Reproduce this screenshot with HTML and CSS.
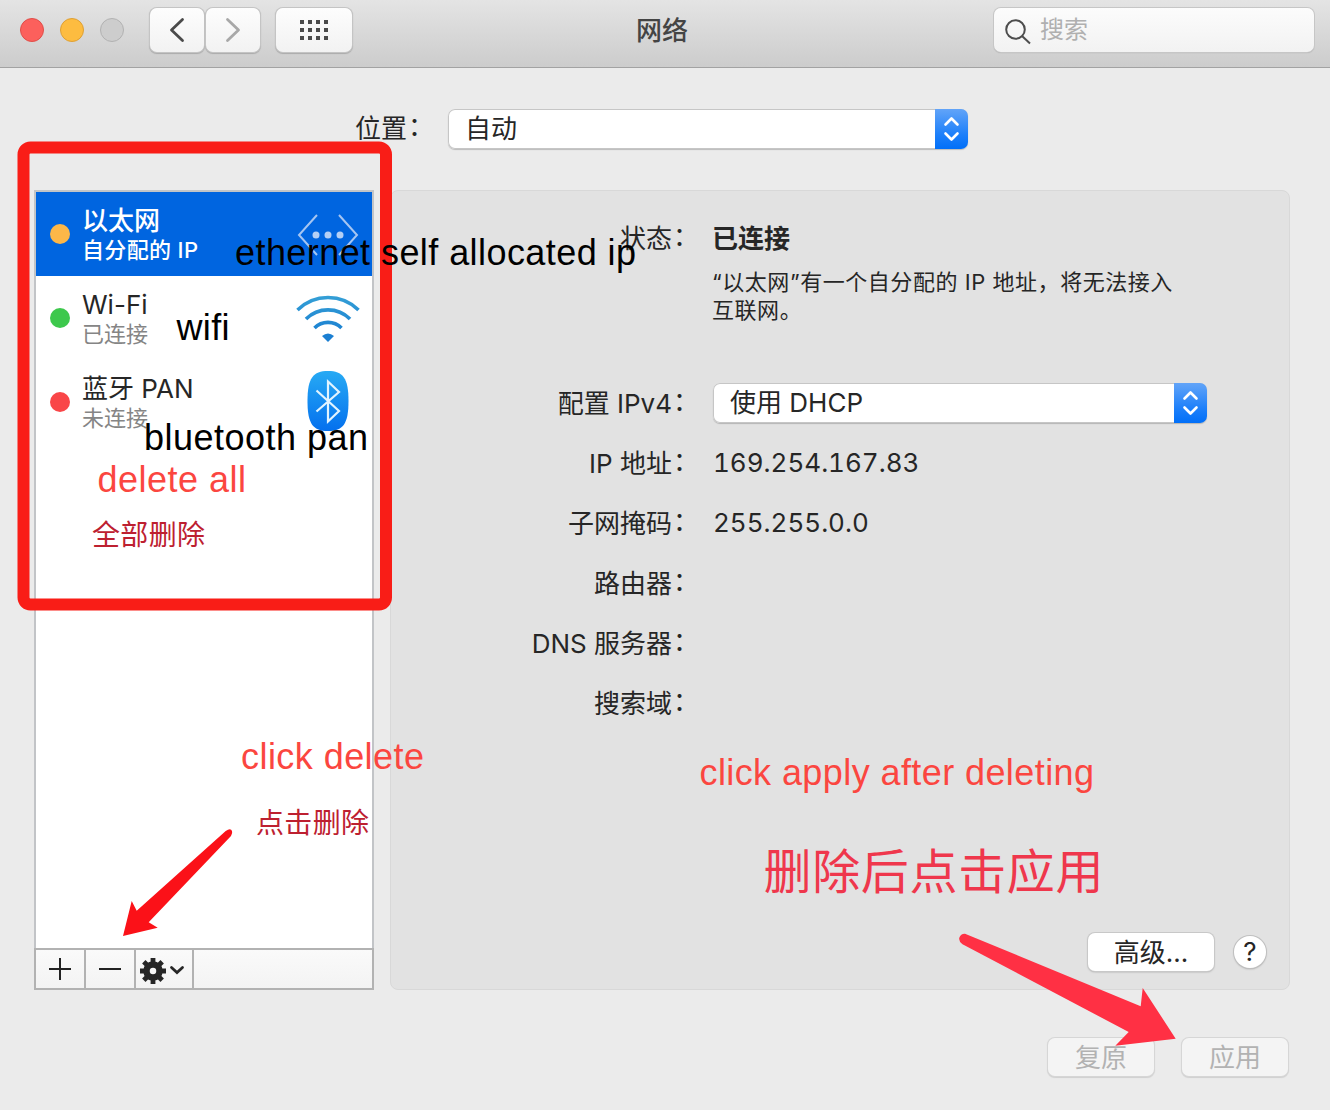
FILE: index.html
```html
<!DOCTYPE html>
<html lang="zh-CN">
<head>
<meta charset="utf-8">
<title>网络</title>
<link rel="stylesheet" href="styles.css">
</head>
<body>
<div class="window">
  <header class="titlebar">
    <div class="lights"><i class="light close"></i><i class="light minimize"></i><i class="light zoom"></i></div>
    <div class="nav">
      <button class="tool"><svg width="54" height="44" fill="none" stroke="#4a4a4a" stroke-width="2.8" stroke-linecap="round" stroke-linejoin="round"><path d="M32.500 11.500 21.500 22l11 10.500"/></svg></button>
      <button class="tool"><svg width="54" height="44" fill="none" stroke="#a8a8a8" stroke-width="2.800" stroke-linecap="round" stroke-linejoin="round"><path d="M21.500 11.500 32.500 22l-11 10.500"/></svg></button>
    </div>
    <button class="tool grid-tool"><svg width="28" height="20" fill="#4a4a4a"><path d="M0 0h4v4H0zm8 0h4v4H8zm8 0h4v4h-4zm8 0h4v4h-4zM0 8h4v4H0zm8 0h4v4H8zm8 0h4v4h-4zm8 0h4v4h-4zM0 16h4v4H0zm8 0h4v4H8zm8 0h4v4h-4zm8 0h4v4h-4z"/></svg></button>
    <h1 class="title">网络</h1>
    <div class="search"><svg width="26" height="26" fill="none" stroke="#4d4d4d" stroke-width="2"><circle cx="10.500" cy="10.500" r="9.300"/><path d="m17 17 8 7.500"/></svg><span>搜索</span></div>
  </header>

  <div class="location">
    <span class="location-label">位置<span class="colon">：</span></span>
    <div class="select"><span>自动</span><b class="stepper"><svg width="33" height="40" fill="none" stroke="#fff" stroke-width="2.600" stroke-linecap="round" stroke-linejoin="round"><path d="m10.500 15.500 6-6 6 6M10.500 24.500l6 6 6-6"/></svg></b></div>
  </div>

  <main class="content">
    <aside class="sidebar">
      <ul class="services">
        <li class="service selected">
          <i class="dot orange"></i>
          <div class="names"><div class="name">以太网</div><div class="state">自分配的 IP</div></div>
          <svg class="glyph" width="66" height="64" fill="none" stroke="#a5c5f2" stroke-width="2"><path d="M22 13 4 33l18 20M44 13l18 20-18 20"/><g fill="#b4cff5" stroke="none"><circle cx="21" cy="33" r="3.500"/><circle cx="33" cy="33" r="3.500"/><circle cx="45" cy="33" r="3.500"/></g></svg>
        </li>
        <li class="service">
          <i class="dot green"></i>
          <div class="names"><div class="name">Wi-Fi</div><div class="state">已连接</div></div>
          <svg class="glyph" width="66" height="64" fill="none" stroke="url(#wave)" stroke-width="3.600"><defs><linearGradient id="wave" gradientUnits="userSpaceOnUse" x1="0" y1="9" x2="0" y2="56"><stop offset="0" stop-color="#35a0d6"/><stop offset="1" stop-color="#1478d0"/></linearGradient></defs><path d="M2.500 24a43.500 43.500 0 0 1 61 0M11 33a31 31 0 0 1 44 0M19.500 42a19 19 0 0 1 27 0"/><path d="M27 50q6-5 12 0l-6 6z" fill="#1b7fd2" stroke="none"/></svg>
        </li>
        <li class="service">
          <i class="dot red"></i>
          <div class="names"><div class="name">蓝牙 PAN</div><div class="state">未连接</div></div>
          <svg class="glyph" width="66" height="64"><defs><linearGradient id="bt" x1="0" y1="0" x2="0" y2="1"><stop offset="0" stop-color="#27aaf4"/><stop offset="1" stop-color="#0470ee"/></linearGradient></defs><path d="M33 1c15 0 20.500 7 20.500 30S48 61 33 61 12.500 54 12.500 31 18 1 33 1z" fill="url(#bt)"/><path d="m21.500 20.500 22.500 20.500-11 10.500v-40L44 22 21.500 41.500" fill="none" stroke="#e2f4ff" stroke-width="2.200"/></svg>
        </li>
      </ul>
      <div class="actions">
        <button class="action"><svg width="24" height="24" stroke="#222" stroke-width="2"><path d="M12 1v22M1 12h22"/></svg></button>
        <button class="action"><svg width="24" height="24" stroke="#222" stroke-width="2"><path d="M1 12h22"/></svg></button>
        <button class="action gear"><svg width="46" height="28" viewBox="0 0 46 28"><g transform="translate(14 15)"><g stroke="#262626" stroke-width="4.800"><path d="M0-13V-7M0 7v6M-13 0h6M7 0h6M-9.200-9.200l4 4M5.200 5.200l4 4M-9.200 9.200l4-4M5.200-5.200l4-4"/></g><circle r="6.500" fill="none" stroke="#262626" stroke-width="6.500"/></g><path d="m32.500 11.500 5.500 5 5.500-5" fill="none" stroke="#262626" stroke-width="2.800" stroke-linecap="round"/></svg></button>
      </div>
    </aside>

    <section class="panel">
      <dl class="form">
        <dt>状态<span class="colon">：</span></dt><dd class="status">已连接</dd>
        <dt></dt><dd class="hint">“以太网”有一个自分配的 IP 地址，将无法接入<br>互联网。</dd>
        <dt>配置 IPv4<span class="colon">：</span></dt><dd><div class="select"><span>使用 DHCP</span><b class="stepper"><svg width="33" height="40" fill="none" stroke="#fff" stroke-width="2.600" stroke-linecap="round" stroke-linejoin="round"><path d="m10.500 15.500 6-6 6 6M10.500 24.500l6 6 6-6"/></svg></b></div></dd>
        <dt>IP 地址<span class="colon">：</span></dt><dd class="number">169.254.167.83</dd>
        <dt>子网掩码<span class="colon">：</span></dt><dd class="number">255.255.0.0</dd>
        <dt>路由器<span class="colon">：</span></dt><dd></dd>
        <dt>DNS 服务器<span class="colon">：</span></dt><dd></dd>
        <dt>搜索域<span class="colon">：</span></dt><dd></dd>
      </dl>
      <div class="panel-buttons"><button class="button advanced">高级...</button><button class="help">?</button></div>
    </section>
  </main>

  <footer class="footer"><button class="button disabled">复原</button><button class="button disabled">应用</button></footer>

  <svg class="notes" width="1330" height="1110">
    <rect x="23.500" y="147.500" width="362.500" height="457" rx="7" fill="none" stroke="#f91d17" stroke-width="12"/>
    <path d="M123 936 131.700 901l5 9.700L225.700 831q5-3.500 6.300 0 .8 2-1 5L148.700 922.300l9 5.400z" fill="#fb1118"/>
    <path d="M965 933.700 1140.700 1006.300l2-18.300 33 50.700-60.400 7 13.400-13.700L962.500 944.300q-4-3-3.200-6.500 1.500-4.300 5.700-4.100z" fill="#ff3044"/>
    <g class="note-black">
      <text x="235" y="265" textLength="401">ethernet self allocated ip</text>
      <text x="176.500" y="340" textLength="53">wifi</text>
      <text x="144" y="450" textLength="224">bluetooth pan</text>
    </g>
    <g class="note-red">
      <text x="97.500" y="492" textLength="148.500">delete all</text>
      <text x="241" y="769" textLength="183">click delete</text>
      <text x="699.500" y="785" textLength="394.500">click apply after deleting</text>
    </g>
    <g class="note-crimson">
      <text x="92" y="544.500" textLength="113">全部删除</text>
      <text x="256" y="832.500" textLength="113">点击删除</text>
    </g>
    <text class="note-large" x="763.500" y="888.500" textLength="340">删除后点击应用</text>
  </svg>
</div>
</body>
</html>
```

FILE: styles.css
```css
* { box-sizing: border-box; }
body { margin: 0; font-family: Inter, "Noto Sans CJK SC", sans-serif; font-size: 26px; color: #262626; }
button { font: inherit; color: inherit; padding: 0; margin: 0; border: 0; }
svg { display: block; flex: none; }

.window { position: relative; display: flex; flex-direction: column; width: 1330px; height: 1110px; background: #ebebeb; overflow: hidden; }

.titlebar { display: flex; align-items: flex-start; flex: none; height: 68px; padding: 8px 16px 0 20px; background: linear-gradient(#e4e4e4, #cccccc); border-bottom: 1px solid #a2a2a2; }
.lights { display: flex; gap: 16px; padding-top: 10px; width: 130px; }
.light { width: 24px; height: 24px; border-radius: 50%; border: 1px solid #b2b2b2; background: #cdcdcd; }
.close { background: #fc605c; border-color: #e04e49; }
.minimize { background: #fdbc40; border-color: #dea034; }
.nav { display: flex; gap: 2px; margin-right: 16px; }
.tool { display: flex; align-items: center; justify-content: center; width: 54px; height: 44px; border-radius: 7px; background: linear-gradient(#fdfdfd, #f2f2f2); box-shadow: 0 0 0 1px #c4c4c4, 0 1px 1px 1px #aaa; }
.grid-tool { width: 76px; }
.title { flex: 1; margin: 0; padding-left: 284px; font-size: 26px; font-weight: 500; line-height: 46px; color: #444; white-space: nowrap; }
.search { display: flex; align-items: center; gap: 9px; width: 320px; height: 44px; padding-left: 11px; border-radius: 7px; background: linear-gradient(#fcfcfc, #f2f2f2); box-shadow: 0 0 0 1px #c6c6c6, 0 1px 1px 0 #999; font-size: 24px; color: #b0b0b0; }
.search span { line-height: 44px; }
.search svg { margin-top: 3px; }

.location { display: flex; align-items: center; height: 40px; margin-top: 41px; padding-left: 355px; flex: none; }
.location-label { width: 93px; line-height: 40px; white-space: nowrap; }
.colon { position: relative; top: -2px; left: 1px; }
.select { display: flex; align-items: center; justify-content: space-between; width: 520px; height: 40px; padding-left: 17px; border-radius: 7px; background: #fff; box-shadow: inset 0 0 0 1px #c6c6c6, 0 1px 1px rgba(0, 0, 0, .2); line-height: 40px; }
.stepper { display: block; width: 33px; height: 40px; border-radius: 0 7px 7px 0; background: linear-gradient(#62a4f8, #1c7ffa 65%, #016ff8); }

.content { display: flex; gap: 16px; height: 800px; margin: 41px 40px 0 34px; flex: none; }
.sidebar { display: flex; flex-direction: column; width: 340px; border: 2px solid #c2c4c7; background: #fff; }
.services { flex: 1; margin: 0; padding: 0; list-style: none; }
.service { display: flex; align-items: center; height: 84px; padding: 0 11px 0 14px; }
.selected { background: #0065e0; color: #fff; }
.dot { width: 20px; height: 20px; border-radius: 50%; flex: none; }
.orange { background: #fdb748; }
.green { background: #3dc84c; }
.red { background: #f94648; }
.names { flex: 1; padding: 2px 0 0 12px; }
.name { height: 30px; line-height: 30px; font-size: 26px; }
.state { height: 28px; line-height: 28px; font-size: 22px; color: #858585; }
.selected .name, .selected .state { color: #fff; font-weight: 500; }
.selected .state { letter-spacing: .35px; }
.actions { display: flex; height: 42px; margin: 0 -2px -2px; border: 2px solid #b2b2b2; background: linear-gradient(#fafafa, #f3f3f3); flex: none; }
.action { display: flex; align-items: center; justify-content: center; width: 50px; border-right: 2px solid #b2b2b2; background: none; }
.gear { width: 58px; justify-content: flex-start; padding: 2px 0 0 3px; }

.panel { display: flex; flex-direction: column; justify-content: space-between; width: 900px; padding: 17px 23px 18px 0; border: 1px solid #d8d8d8; border-radius: 8px; background: #e2e2e2; }
.form { display: grid; grid-template-columns: 307px 1fr; column-gap: 15px; grid-template-rows: 60px 105px; grid-auto-rows: 60px; margin: 0; }
.form dt { text-align: right; line-height: 62px; white-space: nowrap; }
.form dd { margin: 0; line-height: 60px; white-space: nowrap; }
.form .status { margin-left: -1px; font-weight: 600; line-height: 62px; }
.form .hint { margin-left: -1px; font-size: 22px; line-height: 28px; letter-spacing: .55px; }
.form .select { width: 494px; margin-top: 10px; }
.form .number { font-variant-numeric: tabular-nums; }
.panel-buttons { display: flex; align-items: center; justify-content: flex-end; gap: 20px; }
.button { width: 126px; height: 38px; border-radius: 7px; background: #fff; box-shadow: 0 0 0 1px #c8c8c8, 0 1px 2px #999; line-height: 39px; }
.help { width: 32px; height: 32px; border-radius: 50%; background: #fff; box-shadow: 0 0 0 1px #c0c0c0, 0 1px 2px #999; line-height: 32px; }

.footer { display: flex; justify-content: flex-end; gap: 28px; margin: 48px 42px 0 0; }
.footer .button { width: 106px; height: 38px; background: #f4f4f4; box-shadow: 0 0 0 1px #d6d6d6, 0 1px 1px 1px #d0d0d0; color: #b2b2b2; }

.notes { position: absolute; left: 0; top: 0; }
.note-black, .note-red { font-family: "Liberation Sans", Arial, sans-serif; font-size: 36px; fill: #000; }
.note-red { fill: #fb4640; }
.note-crimson { font-family: "Noto Sans CJK SC", sans-serif; font-size: 28px; fill: #bd2030; }
.note-large { font-family: "Noto Sans CJK SC", sans-serif; font-size: 48px; fill: #ef374c; }
```
